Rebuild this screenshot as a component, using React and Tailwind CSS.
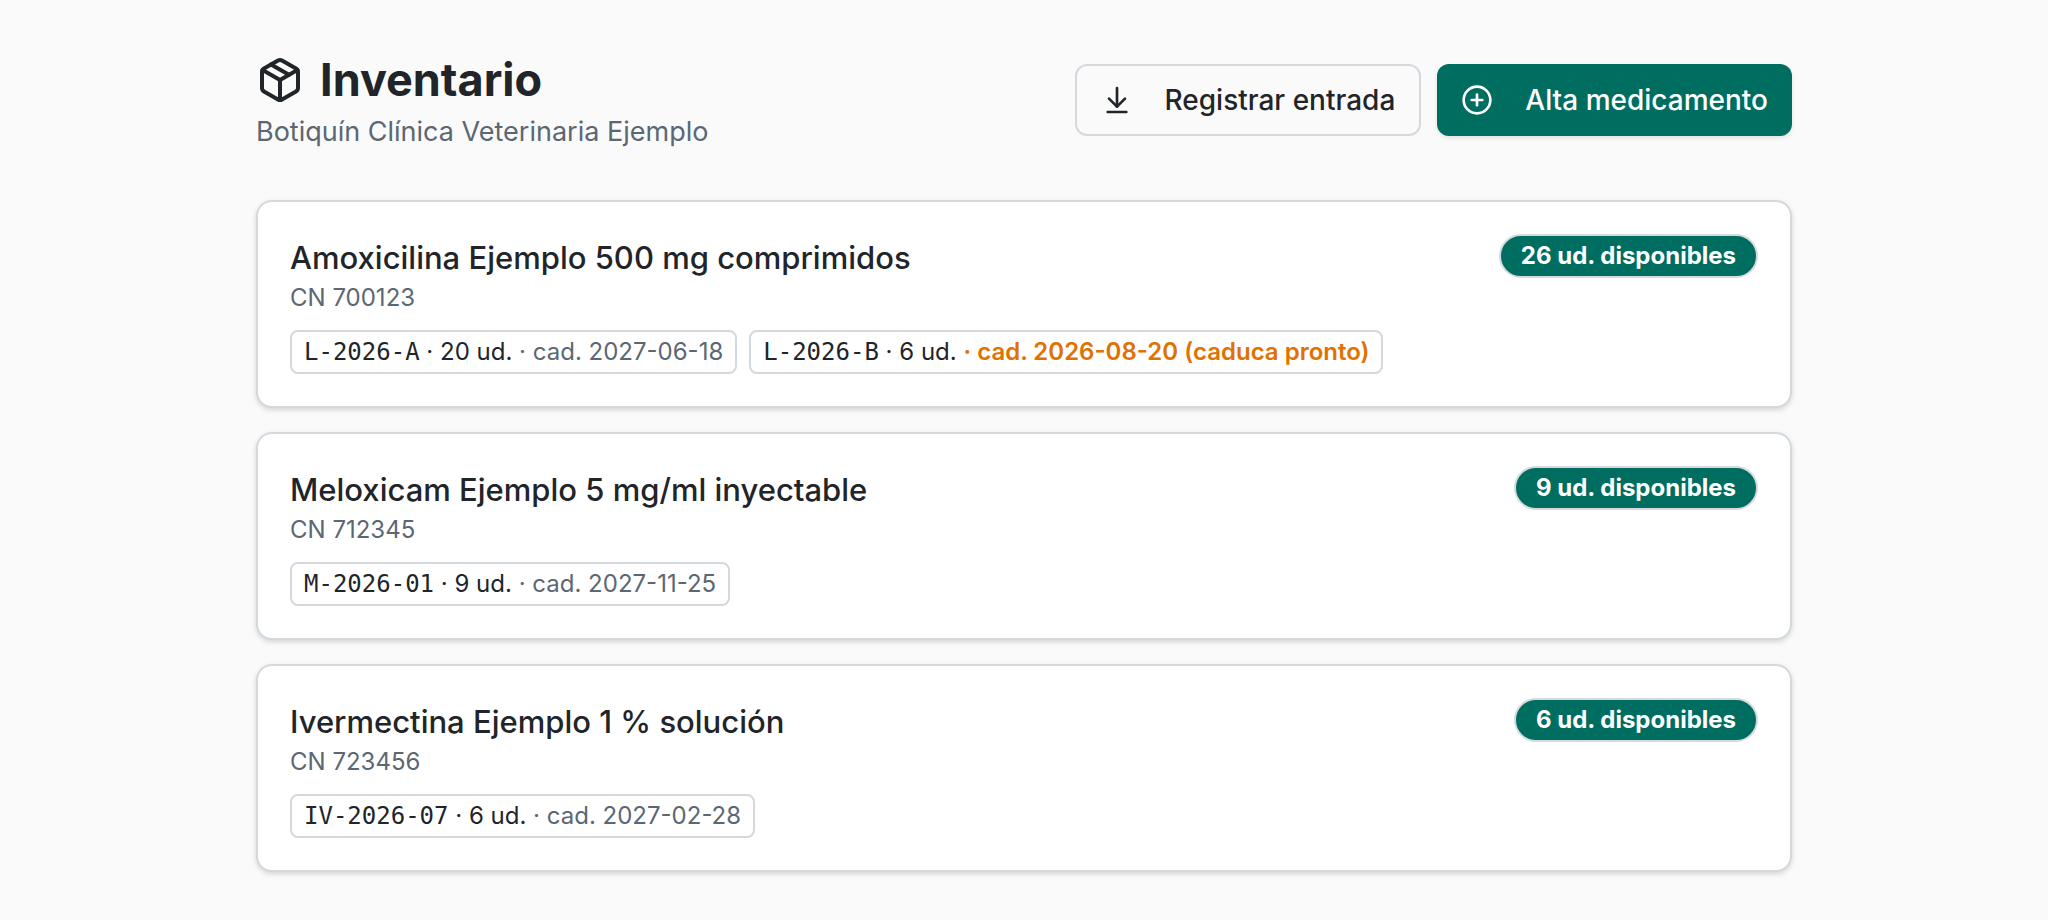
import { ArrowDownToLine, CirclePlus, Package } from "lucide-react";

const medicines = [
  {
    name: "Amoxicilina Ejemplo 500 mg comprimidos",
    code: "700123",
    units: 26,
    lots: [
      { id: "L-2026-A", units: 20, expiry: "2027-06-18" },
      { id: "L-2026-B", units: 6, expiry: "2026-08-20", soon: true },
    ],
  },
  {
    name: "Meloxicam Ejemplo 5 mg/ml inyectable",
    code: "712345",
    units: 9,
    lots: [{ id: "M-2026-01", units: 9, expiry: "2027-11-25" }],
  },
  {
    name: "Ivermectina Ejemplo 1 % solución",
    code: "723456",
    units: 6,
    lots: [{ id: "IV-2026-07", units: 6, expiry: "2027-02-28" }],
  },
];

function Lot({ lot }) {
  return (
    <li className="rounded-lg border-2 border-[#d4d9de] px-3 py-1 text-[24px] leading-8">
      <span className="font-['DejaVu_Sans_Mono',monospace] leading-none">{lot.id}</span>
      {` · ${lot.units} ud. `}
      <span className={lot.soon ? "font-semibold text-[#e17100]" : "text-[#5b6773]"}>
        · cad. {lot.expiry}
        {lot.soon && " (caduca pronto)"}
      </span>
    </li>
  );
}

function MedicineCard({ medicine }) {
  return (
    <article className="flex items-start justify-between gap-8 rounded-2xl border-2 border-[#d4d9de] bg-white p-8 shadow-[0_2px_6px_rgba(0,0,0,0.1),0_2px_4px_rgba(0,0,0,0.06)]">
      <div>
        <h2 className="text-[31px] leading-12 font-medium">{medicine.name}</h2>
        <p className="text-[24px] leading-8 text-[#5b6773]">CN {medicine.code}</p>
        <ul className="mt-4 flex flex-wrap gap-3">
          {medicine.lots.map((lot) => (
            <Lot key={lot.id} lot={lot} />
          ))}
        </ul>
      </div>
      <span className="shrink-0 rounded-full border-2 border-[#d4d9de] bg-[#006d61] px-5 py-1 text-[24px] leading-8 font-bold text-white">
        {medicine.units} ud. disponibles
      </span>
    </article>
  );
}

export default function App() {
  return (
    <div className="min-h-screen bg-[#fafafa] px-8 py-12 font-[Inter,sans-serif] text-[#212529]">
      <main className="mx-auto flex max-w-[1536px] flex-col gap-12">
        <header className="flex flex-wrap items-center justify-between gap-8">
          <div>
            <h1 className="flex items-center gap-4 text-[45px] leading-16 font-bold">
              <Package className="size-12" aria-hidden="true" />
              Inventario
            </h1>
            <p className="text-[27px] leading-10 text-[#5b6773]">Botiquín Clínica Veterinaria Ejemplo</p>
          </div>
          <div className="flex gap-4 text-[28px] leading-10 font-medium">
            <button type="button" className="flex h-18 items-center gap-8 rounded-xl border-2 border-[#d4d9de] px-6">
              <ArrowDownToLine className="size-8" aria-hidden="true" />
              Registrar entrada
            </button>
            <button type="button" className="flex h-18 items-center gap-8 rounded-xl bg-[#006d61] px-6 text-white shadow-[0_2px_4px_rgba(0,0,0,0.1)]">
              <CirclePlus className="size-8" aria-hidden="true" />
              Alta medicamento
            </button>
          </div>
        </header>
        <section aria-label="Medicamentos" className="flex flex-col gap-6">
          {medicines.map((medicine) => (
            <MedicineCard key={medicine.code} medicine={medicine} />
          ))}
        </section>
      </main>
    </div>
  );
}
